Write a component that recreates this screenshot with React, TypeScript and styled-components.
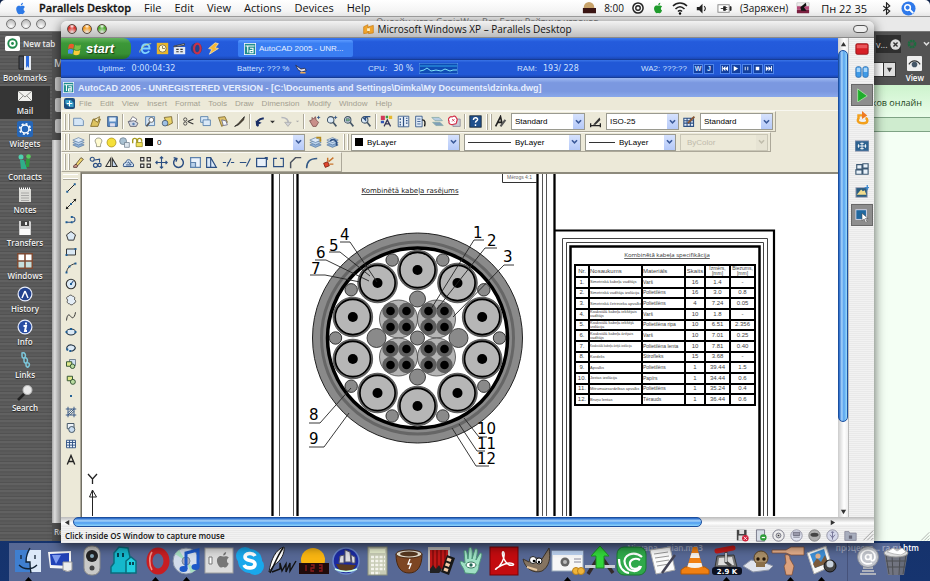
import React from 'react';
import styled, { createGlobalStyle, css } from 'styled-components';

const MAC = '"Open Sans", "Noto Sans", sans-serif';
const XP = '"Liberation Sans", Arial, sans-serif';
const CAD = '"DejaVu Sans", sans-serif';

const Global = createGlobalStyle`
  * { box-sizing: border-box; }
  html, body, #root { height: 100%; margin: 0; }
  body { overflow: hidden; font-family: ${MAC}; font-size: 10px; color: #111; }
  button, select, input { font: inherit; color: inherit; margin: 0; padding: 0; border: 0; background: none; border-radius: 0; }
  svg { display: block; flex: none; }
`;

/* ---------- desktop and menu bar ---------- */

const Desktop = styled.div`
  position: relative;
  height: 100%;
  min-height: 560px;
  overflow: hidden;
  background: linear-gradient(#0d2148, #16346f);
`;

const MenuBar = styled.nav`
  position: relative;
  z-index: 5;
  display: flex;
  align-items: center;
  height: 17px;
  padding: 0 14px;
  background: linear-gradient(#fff, #f4f4f4 70%, #e6e6e6);
  border-bottom: 1px solid #9a9a9a;
  font-size: 11px;
  border-radius: 5px 5px 0 0;
`;

const MenuButton = styled.button<{ $bold?: boolean }>`
  height: 16px;
  line-height: 16px;
  margin-left: ${p => (p.$bold ? 12 : 13)}px;
  font-weight: ${p => (p.$bold ? 600 : 500)};
  -webkit-text-stroke: ${p => (p.$bold ? '0.3px #111' : '0')};
`;

const MenuExtras = styled.div`
  display: flex;
  align-items: center;
  gap: 8px;
  margin-left: auto;
  font-size: 10px;
  white-space: nowrap;
`;

const Clock = styled.span`
  font-size: 11px;
  margin: 0 5px 0 3px;
`;

/* ---------- browser behind ---------- */

const Browser = styled.section`
  position: absolute;
  inset: 17px 0 40px 0;
  display: flex;
  flex-direction: column;
  background: #535353;
`;

const BrowserTitle = styled.header`
  position: relative;
  display: flex;
  align-items: flex-start;
  gap: 5px;
  height: 15px;
  padding: 2px 6px;
  background: #e9e9e9;
  border-bottom: 1px solid #777;
`;

const GreyDot = styled.button`
  width: 10px;
  height: 10px;
  border: 1px solid #777;
  border-radius: 50%;
  background: radial-gradient(circle at 50% 80%, #fff, #aaa);
`;

const BrowserCaption = styled.span`
  flex: 1;
  text-align: center;
  font-size: 9px;
  line-height: 6px;
  color: #777;
`;

const BrowserBody = styled.div`
  flex: 1;
  display: flex;
  min-height: 0;
`;

const SidePanel = styled.aside`
  width: 52px;
  background: repeating-linear-gradient(#5b5b5b 0 2px, #525252 2px 3px, #616161 3px 5px, #575757 5px 7px);
`;

const NewTab = styled.button`
  display: flex;
  align-items: center;
  gap: 3px;
  height: 21px;
  padding: 2px 0 0 5px;
  color: #eee;
  font-size: 8px;
  font-weight: 600;
  white-space: nowrap;
`;

const PanelItem = styled.button<{ $active?: boolean }>`
  display: flex;
  flex-direction: column;
  align-items: center;
  justify-content: center;
  gap: 1px;
  width: 50px;
  height: 33px;
  color: #f2f2f2;
  font-size: 8px;
  line-height: 12px;
  font-weight: 600;
  text-shadow: 0 1px 1px #222;
  background: ${p => (p.$active ? '#353535' : 'transparent')};
`;

const PageStrip = styled.div`
  width: 9px;
  overflow: hidden;
  display: flex;
  flex-direction: column;
  color: #ddd;
  font-weight: 600;
  padding: 24px 0 0 2px;
`;

const StripButton = styled.span`
  height: 14px;
  margin: 7px 0 0 1px;
  background: #ccc;
  border-radius: 2px 0 0 2px;
`;

const StripPage = styled.div`
  flex: 1;
  margin: 7px 0 0 -2px;
  background: linear-gradient(90deg, #aaa, #f0f0f0 30%, #ccc);
`;

const StripLabel = styled.span`
  height: 18px;
  line-height: 18px;
  font-size: 8px;
`;

const BrowserRight = styled.div`
  width: 62px;
  margin-left: auto;
  display: flex;
  flex-direction: column;
`;

const TabRow = styled.div`
  display: flex;
  align-items: center;
  gap: 6px;
  height: 21px;
  padding: 3px 4px 0 8px;
  color: #ddd;
  font-size: 9px;
`;

const TabEnd = styled.div`
  display: flex;
  align-items: center;
  justify-content: flex-end;
  gap: 2px;
  height: 18px;
  width: 26px;
  background: #2f2f2f;
`;

const AddressRow = styled.div`
  display: flex;
  align-items: center;
  justify-content: space-between;
  height: 32px;
  padding: 0 6px 0 0;
`;

const AddressDrop = styled.button`
  display: flex;
  align-items: stretch;
  justify-content: flex-end;
  width: 28px;
  height: 15px;
  background: #fff;
  border: 1px solid #333;
`;

const DropBox = styled.span`
  display: flex;
  align-items: center;
  justify-content: center;
  width: 12px;
  background: #ddd;
  border-left: 1px solid #333;
`;

const ViewButton = styled.button`
  display: flex;
  flex-direction: column;
  align-items: center;
  gap: 1px;
  color: #fff;
  font-size: 8px;
  line-height: 11px;
  font-weight: 600;
`;

const PageLink = styled.a`
  height: 33px;
  line-height: 36px;
  padding-right: 8px;
  text-align: right;
  white-space: nowrap;
  font-size: 9px;
  color: #1d4420;
  text-decoration: none;
  background: linear-gradient(#cdf3cd, #e9fde9);
  border-bottom: 1px solid #7ea384;
`;

const PageBand = styled.div`
  height: 14px;
  background: #cfeccf;
  border-bottom: 1px solid #7ea384;
`;

const PageBlank = styled.div`
  flex: 1;
  background: #f4fff4;
  display: flex;
  align-items: flex-end;
  justify-content: flex-end;
`;

/* ---------- virtual machine window ---------- */

const VmWindow = styled.main`
  position: absolute;
  inset: 21px 56px 38px 61px;
  display: flex;
  flex-direction: column;
  background: #ececec;
  border-radius: 6px 6px 0 0;
  overflow: hidden;
  box-shadow: 0 3px 12px rgba(0, 0, 0, 0.65);
`;

const VmTitle = styled.header`
  display: flex;
  align-items: center;
  height: 17px;
  padding: 0 6px;
  background: linear-gradient(#f2f2f2, #d9d9d9 50%, #bdbdbd);
  border-bottom: 1px solid #8a8a8a;
`;

const Lights = styled.div`
  display: flex;
  gap: 5px;
  width: 60px;
`;

const Light = styled.button<{ $c: string }>`
  width: 10px;
  height: 10px;
  border-radius: 50%;
  border: 1px solid #5a4a42;
  background: radial-gradient(circle at 50% 15%, #fff 0, transparent 35%),
    radial-gradient(circle at 50% 90%, #fff8 0, ${p => p.$c} 60%);
`;

const VmCaption = styled.h1`
  flex: 1;
  display: flex;
  align-items: center;
  justify-content: center;
  gap: 3px;
  margin: 0;
  font-size: 10px;
  font-weight: 500;
`;

const TitleEnd = styled.div`
  display: flex;
  justify-content: flex-end;
  width: 60px;
`;

const Pill = styled.button`
  width: 15px;
  height: 8px;
  border: 1px solid #555;
  border-radius: 4px;
  background: #eee;
`;

const VmMiddle = styled.div`
  flex: 1;
  display: flex;
  min-height: 0;
`;

const Guest = styled.div`
  flex: 1;
  min-width: 0;
  display: flex;
  flex-direction: column;
  background: #ece9d8;
  font-family: ${XP};
  font-size: 8px;
`;

const aqua = css`
  border: 1px solid #1c4f9e;
  border-radius: 5px;
`;

const VScroll = styled.div`
  width: 10px;
  display: flex;
  flex-direction: column;
  align-items: center;
  background: linear-gradient(90deg, #ccc, #fff 60%, #eee);
`;

const VThumb = styled.div`
  width: 10px;
  height: 372px;
  ${aqua}
  background: linear-gradient(90deg, #1c5fc4, #a6d4fb 35%, #56a2ee 60%, #9bdcfc);
`;

const VRest = styled.div`
  flex: 1;
`;

const HScroll = styled.div`
  display: flex;
  align-items: center;
  height: 10px;
  padding: 0 36px 0 0;
  background: linear-gradient(#bbb, #fff 60%, #e4e4e4);
`;

const HThumb = styled.div`
  width: 81%;
  height: 10px;
  margin-right: auto;
  ${aqua}
  background: linear-gradient(#1c5fc4, #a6d4fb 35%, #4f9df0 60%, #8fd6fb);
`;

const ScrollArrow = styled.button`
  display: flex;
  align-items: center;
  justify-content: center;
  width: 12px;
  height: 12px;
`;

const SideTools = styled.div`
  width: 26px;
  display: flex;
  flex-direction: column;
  align-items: center;
  gap: 1px;
  background: repeating-linear-gradient(#f2f2f2 0 1px, #e9e9e9 1px 2px);
  border-left: 1px solid #bbb;
`;

const SideButton = styled.button<{ $on?: boolean; $gap?: boolean }>`
  display: flex;
  align-items: center;
  justify-content: center;
  width: 22px;
  height: 22px;
  margin-top: ${p => (p.$gap ? 5 : 0)}px;
  background: ${p => (p.$on ? '#8d8d8d' : 'transparent')};
  border: ${p => (p.$on ? '1px solid #686868' : '0')};
`;

const StatusBar = styled.footer`
  display: flex;
  align-items: center;
  height: 16px;
  padding: 0 0 0 4px;
  background: repeating-linear-gradient(#f2f2f2 0 1px, #e9e9e9 1px 2px);
  font-size: 8px;
  font-weight: 600;
`;

const StatusIcons = styled.div`
  display: flex;
  align-items: center;
  gap: 5px;
  margin-left: auto;
`;

/* ---------- XP task bar ---------- */

const TaskBar = styled.div`
  display: flex;
  align-items: center;
  height: 22px;
  background: linear-gradient(#3a79ee, #245bdc 18%, #2259d8 85%, #1a47b5);
  border-bottom: 1px solid #163c96;
`;

const StartButton = styled.button`
  display: flex;
  align-items: center;
  gap: 4px;
  width: 70px;
  height: 21px;
  padding-left: 7px;
  border-radius: 0 8px 8px 0;
  background: linear-gradient(#63b35d, #3c9838 25%, #379033 75%, #256e22);
  color: #fff;
  font: italic 700 13px/20px ${XP};
  text-shadow: 1px 1px 1px #163c12;
`;

const QuickLaunch = styled.div`
  display: flex;
  gap: 3px;
  margin: 0 17px 0 8px;
`;

const QuickButton = styled.button`
  width: 14px;
  height: 14px;
`;

const TaskButton = styled.button`
  display: flex;
  align-items: center;
  gap: 3px;
  width: 115px;
  height: 17px;
  padding-left: 6px;
  border-radius: 2px;
  background: linear-gradient(#5c9bff, #3a7ef2 20%, #3a7ef2);
  color: #e8f0ff;
  white-space: nowrap;
`;

const InfoBar = styled.div`
  display: grid;
  grid-template-columns: 139fr 131fr 149fr 124fr 197fr;
  align-items: center;
  height: 18px;
  padding-left: 37px;
  background: linear-gradient(#3a74e6, #2158d6 15%, #2158d6 85%, #1a47b5);
  border-bottom: 1px solid #163c96;
  color: #cfe0ff;
  white-space: nowrap;
`;

const InfoCell = styled.div`
  display: flex;
  align-items: center;
  gap: 6px;
`;

const Lcd = styled.span`
  font: 8px ${CAD};
`;

const PlayerButtons = styled.div`
  display: flex;
  gap: 1px;
`;

const PlayerButton = styled.button<{ $gap?: boolean }>`
  width: 10px;
  height: 10px;
  margin-left: ${p => (p.$gap ? 5 : 0)}px;
  background: #123f9e;
  border: 1px solid #4f85ea;
  color: #cfe0ff;
  font: 700 7px/8px ${XP};
  display: flex;
  align-items: center;
  justify-content: center;
`;

/* ---------- AutoCAD ---------- */

const CadTitle = styled.div`
  display: flex;
  align-items: center;
  gap: 4px;
  height: 19px;
  padding-left: 2px;
  background: linear-gradient(#9db9f2, #7b98e0 25%, #7b98e0 70%, #8aa8ea);
  color: #e6eefe;
  font-size: 9px;
  font-weight: 700;
  white-space: nowrap;
`;

const CadMenu = styled.nav`
  display: flex;
  align-items: center;
  height: 14px;
  padding-left: 3px;
  border-bottom: 1px solid #f8f7f0;
`;

const CadMenuItem = styled.button`
  margin-right: 8px;
  color: #a39f91;
  line-height: 12px;
`;

const CadIcon = styled.span`
  margin-right: 4px;
`;

const Toolbar = styled.div<{ $tall?: boolean }>`
  display: flex;
  align-items: center;
  align-self: flex-start;
  height: ${p => (p.$tall ? 21 : 20)}px;
  border: 1px solid #fbfaf4;
  border-right-color: #aca899;
  border-bottom-color: #aca899;
`;

const Grip = styled.span`
  width: 5px;
  height: 16px;
  margin: 0 1px 0 2px;
  border: 1px solid #fff;
  border-width: 0 1px;
  box-shadow: 1px 0 0 #aca899, inset 1px 0 0 #aca899;
`;

const Tool = styled.button<{ $w?: number }>`
  display: flex;
  align-items: center;
  justify-content: center;
  width: ${p => p.$w ?? 17}px;
  height: 17px;
`;

const Split = styled.span`
  width: 2px;
  height: 15px;
  margin: 0 1px;
  border-left: 1px solid #aca899;
  border-right: 1px solid #fff;
`;

const Combo = styled.label<{ $w: number; $off?: boolean }>`
  display: flex;
  align-items: center;
  width: ${p => p.$w}px;
  height: 17px;
  margin: 0 2px;
  padding-left: 3px;
  gap: 2px;
  border: 1px solid ${p => (p.$off ? '#c9c6b6' : '#9a9a90')};
  background: ${p => (p.$off ? '#ece9d8' : '#fff')};
  color: ${p => (p.$off ? '#aca899' : '#000')};
`;

const Picker = styled.select<{ $in?: number }>`
  appearance: none;
  flex: 1;
  min-width: 0;
  height: 15px;
  padding-left: ${p => p.$in ?? 0}px;
  outline: none;
`;

const Drop = styled.span<{ $off?: boolean }>`
  display: flex;
  align-items: center;
  justify-content: center;
  width: 11px;
  height: 15px;
  background: ${p => (p.$off ? '#e6e3d3' : 'linear-gradient(#d6e2fd, #b5c9f8)')};
`;

const Swatch = styled.span`
  width: 8px;
  height: 8px;
  background: #000;
`;

const Rule = styled.span<{ $w: number }>`
  width: ${p => p.$w}px;
  height: 1px;
  background: #333;
`;

const ModifyRow = styled.div`
  display: flex;
  justify-content: space-between;
  width: 267px;
  margin-right: 4px;
`;

const Work = styled.div`
  flex: 1;
  display: flex;
  min-height: 0;
`;

const DrawTools = styled.div`
  width: 20px;
  display: flex;
  flex-direction: column;
  align-items: center;
  border-right: 1px solid #aca899;
`;

const DrawGrip = styled.span`
  width: 15px;
  height: 5px;
  margin: 2px 0 1px;
  border: 1px solid #fff;
  border-width: 1px 0;
  box-shadow: 0 1px 0 #aca899;
`;

const DrawTool = styled.button`
  display: flex;
  align-items: center;
  justify-content: center;
  width: 16px;
  height: 16px;
`;

const Sheet = styled.div`
  position: relative;
  flex: 1;
  min-width: 0;
  overflow: hidden;
  background: #fff;
  border-top: 2px solid #8d8a7c;
  border-left: 1px solid #716f64;
`;

const SpecTable = styled.table`
  position: absolute;
  left: 492px;
  top: 90px;
  width: 181px;
  height: 142px;
  table-layout: fixed;
  border-collapse: collapse;
  font-family: ${XP};
  font-size: 6px;
  line-height: 5px;
  color: #444;
  tbody tr {
    height: 10px;
  }
  th, td {
    border: 2px solid #000;
    padding: 0;
    font-weight: 400;
    text-align: center;
    overflow: hidden;
    white-space: nowrap;
  }
  th:nth-child(2), td:nth-child(2), th:nth-child(3), td:nth-child(3) {
    text-align: left;
  }
  td:nth-child(3), th:nth-child(n + 5) {
    font-size: 5px;
  }
`;

const Tiny = styled.td<{ $long: boolean }>`
  && {
    font-size: ${p => (p.$long ? 3 : 4)}px;
    line-height: 4px;
    white-space: pre;
  }
`;

/* ---------- dock ---------- */

const FileLabels = styled.div`
  position: absolute;
  right: 11px;
  bottom: 27px;
  display: flex;
  gap: 133px;
  color: #fff;
  font-size: 8px;
  line-height: 12px;
  font-weight: 600;
`;

const Dock = styled.nav`
  position: absolute;
  inset: auto 30px 0 9px;
  display: flex;
  height: 38px;
  background: rgba(118, 130, 168, 0.68);
`;

const DockApps = styled.div`
  flex: 1;
  display: flex;
  justify-content: space-between;
  padding: 4px 11px 0 5px;
`;

const DockEnd = styled.div`
  width: 53px;
  display: flex;
  justify-content: space-between;
  padding: 4px 0 0 6px;
  border-left: 1px solid #46527a;
`;

const DockItem = styled.button`
  display: flex;
  flex-direction: column;
  align-items: center;
  justify-content: space-between;
  width: 28px;
  height: 34px;
`;

/* ---------- icon drawings ---------- */

type Art = React.ReactNode;
const Pic = ({ s = 14, v = 16, children }: { s?: number; v?: number; children: Art }) => (
  <svg width={s} height={s} viewBox={`0 0 ${v} ${v}`} aria-hidden="true">{children}</svg>
);

const N = '#2c4f82';
const line = { fill: 'none', stroke: N, strokeWidth: 1.4 } as const;
const APPLE = 'M11 1c-1.6.3-2.8 1.600-2.600 3.200C10 4.100 11.200 2.700 11 1zM8.200 5.100C7.200 4.600 5.800 4.300 4.600 5 2.300 6.300 2.300 9.600 3.500 12c.8 1.700 1.900 3.300 3.100 3 .9-.3 1.700-.6 2.700-.1 1.700.8 3.200-1.200 4.100-3.500-2-1-2.300-4 .1-5.300-1.300-1.700-3.500-1.700-5.300-1z';
const Apple = ({ c, s = 14 }: { c: string; s?: number }) => <Pic s={s}><path d={APPLE} fill={c} /></Pic>;

const Arrow = ({ d, c = '#333' }: { d: string; c?: string }) => (
  <svg width="7" height="7" viewBox="0 0 8 8" aria-hidden="true"><path d={d} fill={c} /></svg>
);
const LEFT = 'M6 1v6L1 4z';
const RIGHT = 'M2 1v6l5-3z';
const UP = 'M1 6h6L4 1z';
const DOWN = 'M1 2h6L4 7z';

const Chevron = ({ c = '#3b5a9a' }: { c?: string }) => (
  <svg width="7" height="6" viewBox="0 0 8 7" aria-hidden="true"><path d="M1 1.500l3 3 3-3" fill="none" stroke={c} strokeWidth="1.800" /></svg>
);

const sheet = <path d="M2 4h9l3 3v6H2z" fill="#d5e6f6" stroke="#5f83ad" />;
const lens = <><circle cx="7" cy="6" r="4" fill="#dceaf6" stroke="#456" strokeWidth="1.300" /><path d="M10 9l4 5" stroke="#456" strokeWidth="2" /></>;

const standard: [string, Art, number?][] = [
  ['New', sheet],
  ['Open', <><path d="M2 14l3-9h9l-3 9z" fill="#ddc35f" stroke="#7b6420" /><path d="M6 6l7-4-2 7z" fill="#f7efc0" stroke="#7b6420" /></>],
  ['Save', <><path d="M2 2h12v12H2z" fill="#5d8dc4" stroke={N} /><path d="M4 3h8v5H4z" fill="#e2edf8" /><path d="M5 10h6v4H5z" fill="#dde" /></>],
  ['|', null],
  ['Plot', <><path d="M3 8l4-6 5 3-2 4z" fill="#fff" stroke="#667" /><path d="M1.500 8l7-1 5 3-2 4H4z" fill="#cfd6e4" stroke="#556" /><circle cx="8" cy="11" r="1.500" fill="#5a80b0" /></>],
  ['Plot preview', <><path d="M2 2h11v11H2z" fill="#d5e6f6" stroke="#4a76a8" /><circle cx="9" cy="6" r="3" fill="#fff" stroke="#555" /><path d="M7 9l-4 5" stroke="#555" strokeWidth="2" /></>],
  ['Publish', <><path d="M4 3l9-1 1 8-6 3z" fill="#ead36a" stroke="#6f5c28" /><circle cx="5" cy="10" r="3.500" fill="#9fc0e4" stroke="#456" /></>],
  ['|', null],
  ['Cut', <><path d="M7 8l7-3M7 8l7 3" stroke="#333" strokeWidth="1.300" /><circle cx="4" cy="5.500" r="2" fill="none" stroke="#333" /><circle cx="4" cy="10.500" r="2" fill="none" stroke="#333" /></>],
  ['Copy', <><path d="M2 2h9v7H2z" fill="#dbe9f7" stroke="#4a76a8" /><path d="M5 6h9v7H5z" fill="#dbe9f7" stroke="#4a76a8" /></>],
  ['Paste', <><path d="M3 3l8-1 3 7-7 5z" fill="#dfc36b" stroke="#796326" /><path d="M7 6l5 1 2 5-5 1z" fill="#f4f7fb" stroke="#668" /></>],
  ['Match', <path d="M2 14l4-3 8-9-1 4-6 6z" fill="#5c4b33" stroke="#222" />],
  ['|', null],
  ['Undo', <><path d="M5 14c-3-6 1-9 7-10" fill="none" stroke="#1b2f66" strokeWidth="2.600" /><path d="M1 8l8 0-5 6z" fill="#1b2f66" transform="rotate(20 5 10)" /></>, 16],
  ['Undo list', <path d="M5 7h6l-3 3z" fill="#333" />, 9],
  ['Redo', <><path d="M3 3c6 0 9 3 8 7" fill="none" stroke="#b4b6bc" strokeWidth="2" /><path d="M7 9h8l-4 5z" fill="#d0d2d6" stroke="#aaa" /></>, 16],
  ['Redo list', <path d="M6 7h4l-2 2z" fill="#aaa" />, 9],
  ['|', null],
  ['Pan', <><path d="M2 7l3-1 0-3 2 2 2-3 1 4 3 3-3 5H6z" fill="#c98f8a" stroke="#7b4c4c" /><path d="M11 3h4M13 1v4" stroke={N} /></>],
  ['Zoom realtime', <>{lens}<path d="M11 3h4M13 1v4" stroke={N} /></>],
  ['Zoom window', <>{lens}<path d="M5 4.500h4v3H5z" fill="#7b8" stroke="#456" strokeWidth=".8" /></>],
  ['Zoom previous', <>{lens}<path d="M14 2H8l0 4-3-3" fill="none" stroke={N} strokeWidth="1.800" /></>],
  ['|', null],
  ['Properties', <><path d="M1 1h5v5H1z" fill="#d13a5a" /><path d="M7 1h3v3H7z" fill="#3a9c44" /><path d="M11 1h4v4h-4z" fill="#e4b830" /><path d="M1 7h4v3H1z" fill="#3156b6" /><path d="M5 14l4-8 4 8M6 11h6" fill="none" stroke="#335" strokeWidth="1.500" /></>],
  ['Design center', <><path d="M1.500 1.500h13v13h-13z" fill="#e7eff8" stroke={N} /><path d="M8 2v12M4 4v2M4 8v2M11 4h2M11 7h2M11 10h2M4 11v2" stroke={N} strokeWidth="1.500" /></>],
  ['Tool palettes', <><path d="M2 1.500h8v13H2z" fill="#dce8f6" stroke={N} /><path d="M4 5h4M4 8h4M4 11h4" stroke={N} /><path d="M10 6c4 0 4 3 3 8" fill="none" stroke="#111" strokeWidth="1.600" /></>],
  ['Sheet set', <><path d="M1 3h9l4 4H5z" fill="#b7cde2" stroke="#8aa" /><path d="M2 9h9l4 4H6z" fill="#7f9fb8" stroke="#8aa" /></>],
  ['Markup', <><path d="M6 5h9v9H6z" fill="#c8ccd6" stroke="#889" /><path d="M2 3c2-2 3 0 4-1s3-1 4 1 2 2 1 4 0 4-2 4-5 2-7 0 0-3-1-4 0-3 1-4z" fill="#fff" stroke="#d2304a" strokeWidth="1.500" /><path d="M5 5l3 3M8 5L5 8" stroke="#d2304a" /></>],
  ['|', null],
  ['Help', <><rect x="1" y="1" width="14" height="14" fill="#20508c" stroke="#123" /><path d="M5.500 6c0-4 6-3 5 0-.5 1.400-2.500 1.300-2.500 3.500M8 11.500v2" fill="none" stroke="#fff" strokeWidth="1.800" /></>],
];

const layersArt = <><path d="M1 11l7-3 7 3-7 3z" fill="#8fb0d4" stroke="#456a98" strokeWidth=".7" /><path d="M1 8l7-3 7 3-7 3z" fill="#bcd2ea" stroke="#456a98" strokeWidth=".7" /><path d="M1 5l7-3 7 3-7 3z" fill="#dce9f7" stroke="#456a98" strokeWidth=".7" /></>;

const modify: [string, Art][] = [
  ['Erase', <><path d="M4 11l7-9 3 2-7 8z" fill="#edd46e" stroke="#5b4a2c" /><path d="M2 12l3-2 2 2-1 2H2z" fill="#c98" stroke="#533" /></>],
  ['Copy object', <g {...line}><circle cx="4" cy="4" r="2.500" /><circle cx="8" cy="11.500" r="2.500" /><circle cx="13" cy="11" r="2" /><path d="M7 5l6-1v4" /></g>],
  ['Mirror', <><path d="M7 3v10H1z" fill="none" stroke="#333" strokeWidth="1.300" /><path d="M9 3v10h6z" fill="#c6daf0" stroke="#333" strokeWidth="1.300" /></>],
  ['Offset', <path d="M2 13h12c1-3-1-5-3-5 1-4-6-5-6 0-3 0-4 3-3 5zM5 11h6c0-2-2-1-2-2 0-2-2-2-2 0" fill="#d5e4f4" stroke={N} strokeWidth="1.200" />],
  ['Array', <path d="M2 2h4v4H2zM10 2h4v4h-4zM2 10h4v4H2zM10 10h4v4h-4z" fill="#fff" stroke="#333" strokeWidth="1.400" />],
  ['Move', <path d="M8 1v14M1 8h14M6 3l2-2 2 2M6 13l2 2 2-2M3 6L1 8l2 2M13 6l2 2-2 2" {...line} />],
  ['Rotate', <path d="M5 3a6 6 0 1 0 6 0M2 2l4 1-1 4" {...line} strokeWidth={1.800} />],
  ['Scale', <><path d="M2 2h12v12H2z" fill="#eaf2fb" stroke="#5f83ad" strokeWidth="1.500" /><path d="M2 8h6v6H2z" fill="#b8d0ea" stroke="#5f83ad" strokeWidth="1.500" /></>],
  ['Stretch', <path d="M2 2h5v12H2zM7 2l7 12H7" fill="#dceaf8" stroke={N} strokeWidth="1.400" />],
  ['Trim', <path d="M1 8h4M7 8h1M11 8h4M6 13l5-10" {...line} />],
  ['Extend', <path d="M1 8h8M11 8h1M9 13l5-10" {...line} />],
  ['Break at point', <path d="M2 3h12v10H2zM12 2h3v3" fill="#e8f0f9" stroke={N} strokeWidth="1.500" />],
  ['Break', <path d="M6 3H2v10h12V3h-4" {...line} />],
  ['Chamfer', <path d="M2 15V8l6-6h7" {...line} stroke="#4c535e" strokeWidth={1.800} />],
  ['Fillet', <path d="M2 15c0-8 4-12 13-12" {...line} stroke="#345a86" strokeWidth={1.800} />],
  ['Explode', <><path d="M2 9l5-2 2 5-5 2z" fill="#e0462e" stroke="#7a2010" /><path d="M8 7l6-5M9 10l5 0M7 6l0-4" stroke="#c8742c" strokeWidth="1.800" /></>],
];

const P = ({ x, y }: { x: number; y: number }) => <rect x={x - 1.3} y={y - 1.3} width="2.600" height="2.600" fill="#1c5c94" />;
const draw: [string, Art][] = [
  ['Line', <><path d="M3 13L13 3" stroke="#222" strokeWidth="1.300" /><P x={3} y={13} /><P x={13} y={3} /></>],
  ['Construction line', <><path d="M2 14L14 2" stroke="#222" strokeWidth="1.300" /><path d="M1 15l1-4 3 3zM15 1l-1 4-3-3z" fill="#111" /><P x={8} y={8} /></>],
  ['Polyline', <><path d="M2 11h7M9 4c5-1 6 6 1 7" {...line} /><P x={2} y={11} /><P x={9} y={11} /><P x={9} y={4} /></>],
  ['Polygon', <path d="M8 2l6 4.500-2.300 7H4.300L2 6.500z" fill="#dbe9f5" stroke="#333" strokeWidth="1.300" />],
  ['Rectangle', <><path d="M2 4h12v8H2z" fill="#dbe9f5" stroke="#333" strokeWidth="1.300" /><P x={2} y={12} /><P x={14} y={4} /></>],
  ['Arc', <><path d="M2 14C3 8 6 4 14 2" fill="none" stroke="#333" strokeWidth="1.300" /><P x={2} y={14} /><P x={6} y={6} /><P x={14} y={2} /></>],
  ['Circle', <><circle cx="8" cy="8" r="6.300" fill="#dbe9f5" stroke="#333" strokeWidth="1.500" /><path d="M8 8l3-4" stroke={N} strokeWidth="1.500" /><P x={8} y={8} /></>],
  ['Revision cloud', <path d="M4 8C1 7 2 3 5 3c1-2 4-2 5 0 3 0 4 3 2 4 3 1 3 5 0 5-1 3-5 3-6 1-3 0-4-3-2-5z" fill="#e4edf6" stroke="#444" strokeWidth="1.200" />],
  ['Spline', <path d="M2 14C3 4 6 6 8 9s5 1 6-6" fill="none" stroke="#333" strokeWidth="1.300" />],
  ['Ellipse', <><ellipse cx="8" cy="8" rx="6" ry="4" fill="#dbe9f5" stroke="#234" strokeWidth="1.500" /><P x={2} y={8} /><P x={14} y={8} /><P x={8} y={4} /></>],
  ['Ellipse arc', <><path d="M4 11C0 8 4 3 9 4s7 5 1 8H8" fill="#dbe9f5" stroke="#234" strokeWidth="1.500" /><P x={7} y={12} /><P x={3} y={10} /></>],
  ['Insert block', <><path d="M6 2h8v8H6z" fill="#cfe0f2" stroke="#567" /><path d="M2 5h7v6H2z" fill="#dfe88a" stroke="#353" strokeWidth="1.300" /><circle cx="10" cy="11" r="3" fill="#b9dba0" stroke="#353" strokeWidth="1.300" /></>],
  ['Make block', <><path d="M3 3h7v6H3z" fill="#dfe88a" stroke="#353" strokeWidth="1.300" /><circle cx="10.500" cy="10.500" r="3.300" fill="#b9dba0" stroke="#353" strokeWidth="1.300" /></>],
  ['Point', <P x={8} y={8} />],
  ['Hatch', <path d="M1 4h14M1 12h14M4 1v14M12 1v14M4 9l5-5M4 12l8-8M7 12l5-5" fill="none" stroke={N} strokeWidth="1.200" />],
  ['Region', <><path d="M3 2h9v7H3z" fill="#eef4fa" stroke="#456" strokeWidth="1.300" /><circle cx="9" cy="10" r="4" fill="#c9dcef" stroke="#456" strokeWidth="1.300" /></>],
  ['Table', <path d="M2 3h12v10H2zM2 6h12M2 9.500h12M6 3v10M10 3v10" fill="#e9f1fa" stroke={N} strokeWidth="1.200" />],
  ['Text', <path d="M3 14L8 2l5 12M5 10h6" fill="none" stroke="#222" strokeWidth="1.800" />],
];

const quick: [string, Art][] = [
  ['Internet Explorer', <><path d="M3 8h10c0-7-9-7-9.500 0s7 7 9 3" fill="none" stroke="#7fd2ff" strokeWidth="2.200" /><path d="M1 13C0 9 8 2 15 2" fill="none" stroke="#d8e070" /></>],
  ['Outlook', <><rect x="1" y="1" width="14" height="14" fill="#e8b629" /><circle cx="8" cy="8" r="4.500" fill="#fff8d0" stroke="#764" /><path d="M8 5v3h3" fill="none" stroke="#764" /></>],
  ['Movie', <><path d="M1 6h14v9H1z" fill="#e4e9f2" /><path d="M1 5l13-3v2L1 6z" fill="#ddd" stroke="#333" /><path d="M4 9h3M9 9h3M4 12h3M9 12h3" stroke="#333" strokeWidth="1.400" /></>],
  ['Opera', <><circle cx="8" cy="8" r="7" fill="#25438e" /><ellipse cx="9" cy="8" rx="4" ry="6" fill="none" stroke="#c8324a" strokeWidth="2.600" /></>],
  ['Winamp', <path d="M10 1L2 8l4 1-3 6 11-7-4-1 4-5z" fill="#f7b733" stroke="#f4e2b0" />],
];

const AcadIcon = ({ s = 12 }: { s?: number }) => (
  <Pic s={s}><rect x=".5" y=".5" width="15" height="15" fill="#1f8d8d" stroke="#fff" /><path d="M2 4h12M5 4v9M8 7h4v6H8v-3h4" fill="none" stroke="#fff" strokeWidth="1.500" /></Pic>
);

const disc = <circle cx="8" cy="8" r="7.500" fill="#e9eefb" />;
const panel: [string, Art][] = [
  ['Bookmarks', <><path d="M2 1h5v13H2z" fill="#444a57" stroke="#222" /><path d="M7 1h7v14H7z" fill="#e5e9ef" /><path d="M9 1h3v12l-1.500-2L9 13z" fill="#2b6be0" /></>],
  ['Mail', <><path d="M1 3h14v10H1z" fill="#f1f1ee" /><path d="M1 3l7 6 7-6M1 13l5-5M15 13l-5-5" fill="none" stroke="#8e8e8a" /></>],
  ['Widgets', <><rect x="0" y="0" width="16" height="16" rx="2" fill="#2566b8" /><circle cx="8" cy="8" r="4" fill="none" stroke="#fff" strokeWidth="1.500" /><circle cx="8" cy="8" r="5.300" fill="none" stroke="#fff" strokeWidth="1.600" strokeDasharray="2 2.160" /></>],
  ['Contacts', <><path d="M3 6h4l3 9H4z" fill="#2fae8a" /><circle cx="4" cy="3" r="2.500" fill="#4fd0ae" /><path d="M9 5h4l-1 8H9z" fill="#2f9a3c" /><circle cx="11.500" cy="2.500" r="2.300" fill="#57cc5c" /></>],
  ['Notes', <><path d="M2 2h12v13H2z" fill="#dcdcd8" /><path d="M2 1.500h12" stroke="#fff" strokeWidth="2" strokeDasharray="1 1" /><path d="M4 6h8M4 8.500h8M4 11h8M4 13.500h8" stroke="#999" strokeWidth=".8" /></>],
  ['Transfers', <><path d="M2 1h11l1 1v13H2z" fill="#d0d0d0" /><path d="M4 1h8v5H4z" fill="#444" /><path d="M8 2h2v3H8z" fill="#eee" /><path d="M3 9h10v6H3z" fill="#fafafa" /></>],
  ['Windows', <><path d="M0 0h16v16H0z" fill="#7d4a33" /><path d="M1.500 1.500h5.700v5.700H1.500zM8.800 1.500h5.700v5.700H8.800z" fill="#fff" /><path d="M1.500 8.800h5.700v5.700H1.500zM8.800 8.800h5.700v5.700H8.800z" fill="#c5dfdd" /></>],
  ['History', <>{disc}<circle cx="8" cy="8" r="6.300" fill="#22428f" /><path d="M8 5l-3 7M8 5l3 7" stroke="#fff" strokeWidth="1.500" /></>],
  ['Info', <>{disc}<circle cx="8" cy="8" r="6.300" fill="#2a4ea3" /><path d="M9 3.500v2M6.500 7H9l-1 5h2" fill="none" stroke="#fff" strokeWidth="2" /></>],
  ['Links', <path d="M5 1c3-1 4 2 3 4S5 6 5 4s0-2 0-3zM7 6c3-1 4 2 3 4s-3 1-3-1 0-2 0-3zM9 11c3-1 4 1 3 3s-3 1-3-1z" fill="none" stroke="#7cc8dc" strokeWidth="1.500" />],
  ['Search', <><path d="M1 15l6-6" stroke="#222" strokeWidth="2.600" /><circle cx="10.500" cy="5" r="4.500" fill="#e8e8e8" stroke="#bbb" /></>],
];

const side: [string, Art, boolean?, boolean?][] = [
  ['Stop', <><rect x="1" y="2" width="14" height="12" rx="1.500" fill="#d71f26" stroke="#8f1015" /><path d="M2 3h12v4H2z" fill="#e8565a" /></>],
  ['Pause', <><rect x="1" y="2" width="6" height="12" rx="2" fill="#3f9be8" stroke="#2b6db0" /><rect x="9" y="2" width="6" height="12" rx="2" fill="#3f9be8" stroke="#2b6db0" /><path d="M2 3h4v5H2zM10 3h4v5h-4z" fill="#a8d6fa" /></>],
  ['Play', <path d="M3 1l11 8-11 7z" fill="#1fae2b" stroke="#bdf0b5" strokeWidth=".8" />, true],
  ['Reset', <><path d="M4 8c-3 6 4 6 6 6 5 0 5-5 2-6M4 9V5h4" fill="none" stroke="#f2a01c" strokeWidth="2.800" /><path d="M8 0l6 5-6 4z" fill="#f07a22" /></>],
  ['Full screen', <><rect x="0" y="2" width="16" height="12" fill="#2f6391" stroke="#aab" /><path d="M3 8h10M8 4v8M4 6v4M12 6v4M6 5h4M6 11h4" stroke="#fff" /></>, false, true],
  ['Coherence', <path d="M2 3h6v5H2zM9 2h6v5H9zM1 9h7v5H1zM9 8h6v6H9z" fill="#e9f2fa" stroke="#3c5872" strokeWidth="1.300" />],
  ['Snapshot', <><rect x="1" y="3" width="13" height="11" fill="#2a5c80" stroke="#aab" /><path d="M2 11l5-6 2 2 2-1 2 5z" fill="#f2dc8c" /><path d="M14 0v6M11 3h5" stroke="#3f8ad0" strokeWidth="1.500" /></>],
  ['Capture', <><rect x="1" y="2" width="12" height="11" fill="#21689f" stroke="#dde" /><path d="M8 6l7 6-3 0 2 4-2 .5-1.500-4-2.500 2z" fill="#fff" stroke="#444" strokeWidth=".6" /></>, true],
];

const status: [string, Art][] = [
  ['Floppy', <><path d="M1 1h12v13H1z" fill="#444" /><path d="M4 1h6v5H4zM3 8h8v6H3z" fill="#ddd" /><circle cx="11.500" cy="11.500" r="4" fill="#d0203a" /><path d="M9.500 9.500l4 4M13.500 9.500l-4 4" stroke="#fff" /></>],
  ['Disk', <><path d="M3 1h10v14H3z" fill="#d7dde6" stroke="#667" /><circle cx="11.500" cy="10.500" r="4" fill="#2f9d3a" /><path d="M9.500 10.500h4" stroke="#fff" strokeWidth="1.500" /></>],
  ['CD', <><circle cx="8" cy="8" r="7" fill="#eee" stroke="#667" /><circle cx="8" cy="8" r="3" fill="#ccc" stroke="#667" /><circle cx="8" cy="8" r="1" fill="#333" /></>],
  ['Network', <><circle cx="8" cy="8" r="7" fill="#dfe2ef" stroke="#889" /><path d="M4 4h8v4H4zM4 10h8" fill="#99a" stroke="#667" /></>],
  ['Mouse', <><circle cx="8" cy="8" r="7" fill="#b0b0b0" stroke="#777" /><ellipse cx="8" cy="7" rx="5" ry="2.500" fill="#444" /></>],
  ['USB', <><circle cx="8" cy="8" r="7" fill="#d5d8ea" stroke="#889" /><path d="M8 3v10M5 7l3 4 3-4M6 4h4" fill="none" stroke="#779" strokeWidth="1.200" /></>],
  ['Folder', <><path d="M1 3h5l1 2h8v9H1z" fill="#a7adbd" stroke="#889" /><path d="M6 8h4v4H6z" fill="#667" /></>],
];

const dock: [string, Art, boolean?][] = [
  ['Finder', <><rect x="1" y="3" width="26" height="22" fill="#dce9f8" /><path d="M1 3h15c-3 5-4 10-3 12h3c0 4 0 7 1 10H1z" fill="#3f7fd0" /><path d="M16 1c-4 6-4 10-4 14h4c0 4 0 7 1 11M7 8v4M21 8v4M5 18c5 5 13 5 18 0" fill="none" stroke="#123" strokeWidth="1.300" /></>, true],
  ['Parallels', <><path d="M2 5l23-1v18L4 21z" fill="#f4f4f4" /><path d="M4 7l19-1v13L5 18z" fill="#2142b8" /><path d="M6 8l9 0-5 9z" fill="#7f9cf0" /><path d="M17 15h9v8q-4 3-9 0z" fill="#eee" stroke="#999" /></>],
  ['Clip', <><rect x="6" y="-1" width="16" height="29" rx="7" fill="#c9c9c7" stroke="#8a8a88" /><circle cx="14" cy="9" r="6" fill="#222" /><circle cx="14" cy="9" r="2" fill="#8ab" /><circle cx="14" cy="21" r="2.500" fill="#444" /></>],
  ['Adium', <><path d="M2 26v-6l3-4V6l5-6 9 1 2 9v16z" fill="#15b8cc" stroke="#0b6c7c" strokeWidth="1.500" /><path d="M17 26V14l5-4 5 4v12z" fill="#21cede" stroke="#0b6c7c" strokeWidth="1.500" /><path d="M9 6v4M14 6v4M21 15v3M24 15v3" stroke="#023" strokeWidth="1.600" /></>],
  ['Opera', <><ellipse cx="17" cy="14" rx="8.500" ry="10.500" fill="none" stroke="#c81e22" strokeWidth="6" /><path d="M11 5c-3 4-3 13 0 18" fill="none" stroke="#f29086" strokeWidth="1.600" /></>, true],
  ['iTunes', <><circle cx="13" cy="14" r="13" fill="#d2dceb" stroke="#8793a6" /><path d="M13 14L2 7l4-4zM13 14l10 9-5 3z" fill="#a7e0c2" /><circle cx="13" cy="14" r="4" fill="#aab" stroke="#789" /><path d="M13 22V6l12-3v17" fill="none" stroke="#1c58c8" strokeWidth="3" /><ellipse cx="10.500" cy="22" rx="4" ry="3" fill="#1c58c8" /><ellipse cx="22.500" cy="20" rx="4" ry="3" fill="#1c58c8" /></>, true],
  ['System Preferences', <><rect x="0" y="1" width="28" height="25" fill="#dcdcdc" stroke="#a0a0a0" /><g transform="translate(9 4) scale(1.100)"><path d={APPLE} fill="#777" /></g><path d="M4 10h3v7H4z" fill="#fff" stroke="#777" /></>],
  ['Skype', <><circle cx="9" cy="9" r="9" fill="#19a8ec" /><circle cx="19" cy="19" r="9" fill="#19a8ec" /><circle cx="14" cy="14" r="12" fill="#19a8ec" /><path d="M19 9c-2-4-10-3-10 1 0 5 10 2 10 7 0 5-9 5-11 1" fill="none" stroke="#fff" strokeWidth="3.600" /></>],
  ['Quill', <><path d="M1 25C3 12 8 2 16 0c1 6-3 14-10 18z" fill="#fff" stroke="#222" /><path d="M2 26C8 14 10 8 15 1M4 25l8-3 0-6 2 8 4-7v8l4-9 0 8 6-10" fill="none" stroke="#111" strokeWidth="1.400" /></>],
  ['Clock', <><circle cx="13" cy="13" r="12" fill="#f9b511" /><rect x="-1" y="16" width="30" height="11" fill="#200b0b" /><path d="M6 18v6M11 18h3v3h-3v3h3M19 18h3v6h-3M19 21h3" fill="none" stroke="#8e1c1c" strokeWidth="1.300" /></>],
  ['Galleon', <><circle cx="14" cy="14" r="13" fill="#1b2aa0" stroke="#6a86c8" strokeWidth="1.500" /><path d="M4 17l20 1-4 6H8z" fill="#5a3a20" /><path d="M7 16l1-7 4-1v8zM13 15l0-12 5 2 1 10zM20 16l-1-8 4 2 0 6z" fill="#dcdce2" stroke="#556" /><path d="M3 22q11 5 22 0" fill="none" stroke="#cfe" strokeWidth="1.500" /></>],
  ['Calculator', <><rect x="5" y="0" width="19" height="28" fill="#c8ccb6" stroke="#8c917c" /><rect x="7" y="2" width="15" height="4" fill="#e9f0d0" /><path d="M8 10h14M8 14h14M8 18h14M8 22h14M8 26h9" stroke="#f4f4ec" strokeWidth="2.500" strokeDasharray="3 1.300" /></>],
  ['Coconut', <><path d="M1 7c0 13 5 19 13 19s13-6 13-19z" fill="#7d4623" stroke="#4a2810" /><ellipse cx="14" cy="7" rx="13" ry="4" fill="#e9e2d2" stroke="#4a2810" /><ellipse cx="14" cy="7" rx="9" ry="2.500" fill="#57381f" /><path d="M15 12l-2 5h3l-2 5" fill="none" stroke="#fff" strokeWidth="1.300" /></>],
  ['Photo Booth', <><path d="M1 0h22v24H1z" fill="#b9b9b9" /><path d="M3 3h18v19H3z" fill="#c01818" /><path d="M6 3v19M10 3v19M14 3v19M18 3v19" stroke="#7c0a0a" strokeWidth="1.300" /><path d="M3 22l3-4 3 4 3-4 3 5-3 3H3z" fill="#222" /><path d="M20 8l8 3-6 17-8-3z" fill="#181818" /><path d="M20 12l4 1.500M18.500 17l4 1.500M17 22l4 1.500" stroke="#f2c9a5" strokeWidth="3.300" /></>],
  ['Hand', <><path d="M6 26c-1-6-7-10-4-12l4 2L5 4c2-2 3 0 4 8L10 1c2-2 4-1 3 11l3-10c3-1 3 1 1 11l4-7c3 0 2 2-1 12 0 5-2 7-4 9z" fill="#9fe0c4" stroke="#4c9478" /><ellipse cx="12" cy="18" rx="5" ry="3" fill="#fff" stroke="#38765c" /><circle cx="12" cy="18" r="1.700" fill="#265" /></>],
  ['Reader', <><rect x="0" y="0" width="28" height="28" fill="#c30b0f" stroke="#770306" /><path d="M6 22c5-3 9-11 8-16-1-3-3 0 0 6s6 7 9 6c2-1-2-3-8-1s-11 6-9 5z" fill="none" stroke="#fff" strokeWidth="1.500" /></>],
  ['GIMP', <><path d="M1 12l6 3c3-4 10-5 13-3l7-11c2 10 0 19-7 23-8 3-17-2-19-12z" fill="#857461" stroke="#3d342a" /><circle cx="11" cy="13" r="3.500" fill="#fff" stroke="#222" /><circle cx="17" cy="14" r="3" fill="#fff" stroke="#222" /><circle cx="12" cy="14" r="1.300" /><circle cx="17" cy="15" r="1.200" /><path d="M5 20l10 3" stroke="#e8c9a0" strokeWidth="2" /></>],
  ['Parallels VM', <><rect x="-2" y="4" width="31" height="20" fill="#f7f7f7" stroke="#9ab" /><path d="M-2 4h31v4H-2z" fill="#bcd2f0" /><circle cx="11" cy="15" r="4.500" fill="#666" /><circle cx="11" cy="15" r="2" fill="#bbb" /><path d="M20 12h7M20 15h7" stroke="#889" /><circle cx="22" cy="24" r="3.500" fill="#f0b53a" stroke="#b8801c" /><circle cx="27" cy="24" r="3.500" fill="#f0b53a" stroke="#b8801c" /></>, true],
  ['Transfer', <><path d="M14 8L2 27M14 8l13 18" stroke="#332a2a" strokeWidth="3.500" /><path d="M-1 18h30v3H-1z" fill="#c9ccd4" /><path d="M14-1l9 10h-5v12h-8V9H5z" fill="#32d63a" stroke="#1d8c22" /></>],
  ['BitTorrent', <><rect x="0" y="0" width="29" height="28" rx="7" fill="#2fa94a" stroke="#1b7830" /><path d="M25 10C17 3 5 8 8 17s14 9 16 2M23 13c-5-3-11 0-10 5s8 5 10 1M2 12c0 8 4 13 10 14" fill="none" stroke="#fff" strokeWidth="2.200" /></>],
  ['TextEdit', <><path d="M1 3l20-3 5 23-19 4z" fill="#fbfbfb" stroke="#aaa" /><path d="M5 7l14-2M6 11l14-2M7 15l13-2M8 19l12-2" stroke="#999" /><path d="M26 8L13 26" stroke="#445" strokeWidth="2.500" /></>],
  ['VLC', <><path d="M0 23l4-3h20l4 3v4H0z" fill="#f08012" stroke="#b85a04" /><path d="M12 0h4l6 21q-8 4-16 0z" fill="#f08012" /><path d="M10.500 6h7l1.300 5H9zM7.600 16h12.800l1 3.500q-7.500 3-15 0z" fill="#f6f2ec" /></>],
  ['MenuMeters', <><path d="M4 9l17-1 3 12H2z" fill="#777" stroke="#333" /><path d="M6 11l13-1 2 8H5z" fill="#ddd" /><path d="M13 4v11l5 4" fill="none" stroke="#444" strokeWidth="3" /><path d="M13 6v9" stroke="#eee" strokeWidth="1.500" /><path d="M4 4L20 1" stroke="#c21a1a" strokeWidth="5" strokeLinecap="round" /><rect x="-1" y="20" width="30" height="8" rx="3" fill="#0b1020" /><text x="14" y="27" textAnchor="middle" fontSize="7" fontWeight="700" fill="#fff" fontFamily={CAD}>2.9 K</text></>, true],
  ['Skull', <><path d="M-1 19l8-6 12 2 10 4-4 4-16 2z" fill="#dfe3ec" stroke="#8c94a6" /><circle cx="17" cy="11" r="7" fill="#a98f68" stroke="#5b4427" /><path d="M12 15h9v5h-9z" fill="#8b6f48" /><circle cx="14" cy="12" r="1.700" fill="#221408" /><circle cx="20" cy="12" r="1.700" fill="#221408" /></>],
  ['Hands', <><path d="M-4 3h14l5-3h13v8H15l-5-2H-4z" fill="#e5b08d" stroke="#7c4b31" strokeWidth=".7" /><path d="M9 8c3-1 5 0 5 4l4 7-2 9h-6l-2-9 2-3z" fill="#dca27e" stroke="#7c4b31" strokeWidth=".7" /></>, true],
  ['iPhoto', <><path d="M-1 6L18-1l6 20-18 8z" fill="#f8f8f6" stroke="#aaa" /><path d="M2 7l14-5 4 14L7 21z" fill="#3e8fd6" /><path d="M5 17l4-6 4 4 4-7 3 8-13 5z" fill="#7a5b3c" /><circle cx="10" cy="9" r="2.600" fill="#e2b48f" /><circle cx="22" cy="19" r="6" fill="#444" stroke="#111" /><circle cx="22" cy="17" r="3.500" fill="#c8d2dc" /></>, true],
];

const dockEnd: [string, Art][] = [
  ['Web', <><path d="M9 21h10M8 24h12M6 27h16" stroke="#aeb2bb" strokeWidth="2" /><circle cx="14" cy="10" r="10.500" fill="#c4c7ce" stroke="#888d98" /><circle cx="14" cy="10" r="2.500" fill="none" stroke="#fff" strokeWidth="1.700" /><path d="M17 7v5c0 3 4 2 4-2 0-9-14-9-14 0 0 7 7 8 11 6" fill="none" stroke="#fff" strokeWidth="1.700" /></>],
  ['Trash', <><path d="M2 5h24l-4 23H6z" fill="#75777c" opacity=".85" /><path d="M4 8l3 19M10 8l1 20M18 8l-1 20M24 8l-3 19M4 14h20M5 20h18" stroke="#4c4e53" /><ellipse cx="14" cy="6" rx="12" ry="4" fill="#dedede" stroke="#999" /><path d="M5 5l6-4 4 3 5-3 4 4-5 3-7-1z" fill="#fff" stroke="#bbb" /></>],
];

/* ---------- cable drawing ---------- */

const CX = 335.5;
const CY = 162;
const polar = (deg: number, r: number) => {
  const a = (deg * Math.PI) / 180;
  return [CX + Math.sin(a) * r, CY - Math.cos(a) * r] as const;
};
const steps = Array.from({ length: 10 }, (_, i) => i * 36);

const callouts: [string, number, number, string][] = [
  ['4', 258, 64, 'M258 66h10L295 106'],
  ['5', 247, 75, 'M247 76h11L288 100'],
  ['6', 234, 82, 'M233 84h11L287 105'],
  ['7', 229, 98, 'M228 99h15L278 106'],
  ['1', 391, 62, 'M402 64h-10L349 133'],
  ['2', 405, 70, 'M415 72h-12L355 133'],
  ['3', 421, 86, 'M432 89h-10L371 141'],
  ['8', 227, 244, 'M227 247h11L269 212'],
  ['9', 227, 268, 'M227 271h15L267 237'],
  ['10', 395, 258, 'M405 261h-8L382 242'],
  ['11', 395, 273, 'M403 275h-8L377 248'],
  ['12', 395, 288, 'M407 290h-13L370 252'],
];

const Drawing = () => (
  <svg width="756" height="342" viewBox="0 -2 756 342" role="img" aria-label="Kabeļa rasējums">
    <g stroke="#000" fill="none">
      <path d="M190.500 -2V342M215.500 -2V342M455.500 -2V342M472.500 -2V342" strokeWidth="2.300" />
      <path d="M197.500 -2V342M211.500 -2V342M460.500 -2V342M464.500 -2V342" stroke="#555" />
      <path d="M420.500 -2V6.500H455" stroke="#333" />
      <path d="M473 54.500H692V342" strokeWidth="2.200" />
      <path d="M480.500 342V62.500H685.500V342M484.500 342V66.500H681.500V342" stroke="#444" />
      <path d="M488.500 342V70.500H677.500V342" strokeWidth="2.500" />
    </g>
    <text x="425" y="3" fontSize="5" fill="#666" fontFamily={XP}>Mērogs 4:1</text>
    <g textAnchor="middle" textDecoration="underline">
      <text x="328" y="17" fontSize="7" fill="#222" fontFamily={CAD}>Kombinētā kabeļa rasējums</text>
      <text x="585" y="81" fontSize="6" fill="#333" fontFamily={MAC}>Kombinētā kabeļa specifikācija</text>
    </g>
    <circle cx={CX} cy={CY} r="105" fill="#8a8a8a" stroke="#222" />
    <circle cx={CX} cy={CY} r="96" fill="#8a8a8a" stroke="#666" strokeWidth="3" />
    <circle cx={CX} cy={CY} r="90" fill="#fff" stroke="#000" strokeWidth="3.500" />
    {steps.map(a => {
      const [x, y] = polar(a + 18, 82);
      return <circle key={a} cx={x} cy={y} r="6.200" fill="#8a8a8a" stroke="#333" />;
    })}
    {steps.map(a => {
      const [x, y] = polar(a, 68);
      return (
        <g key={a}>
          <circle cx={x} cy={y} r="19.800" fill="#666" stroke="#444" strokeWidth=".8" />
          <circle cx={x} cy={y} r="17.600" fill="#b6b6b6" stroke="#000" strokeWidth="1.600" />
          <circle cx={x} cy={y} r="5" />
        </g>
      );
    })}
    {[-19, 19].map(dx => [-19, 19].map(dy => (
      <g key={`${dx}${dy}`}>
        <circle cx={CX + dx} cy={CY + dy} r="19" fill="#b4b4b4" stroke="#444" strokeWidth=".8" />
        {[-8, 8].map(ex => [-8, 8].map(ey => (
          <g key={`${ex}${ey}`}>
            <circle cx={CX + dx + ex} cy={CY + dy + ey} r="8.200" fill="#5e5e5e" />
            <circle cx={CX + dx + ex} cy={CY + dy + ey} r="4.300" />
          </g>
        )))}
      </g>
    )))}
    <g fill="#8a8a8a" stroke="#333" strokeWidth=".9">
      <circle cx={CX} cy={CY} r="7" />
      <circle cx={CX} cy={CY - 39} r="8" />
      <circle cx={CX} cy={CY + 39} r="8" />
      <circle cx={CX - 41} cy={CY} r="9.500" />
      <circle cx={CX + 41} cy={CY} r="9.500" />
    </g>
    {callouts.map(([n, x, y, d]) => (
      <g key={n}>
        <path d={d} fill="none" stroke="#222" strokeWidth=".9" />
        <text x={x} y={y} fontSize="15" fontFamily={CAD}>{n}</text>
      </g>
    ))}
    <g stroke="#222" fill="none">
      <path d="M10.500 342V314M10.500 314l-3 7h7z" />
      <path d="M6 298l4.500 5L15 298M10.500 303v5" strokeWidth="1.300" />
    </g>
  </svg>
);

const rows: string[][] = [
  ['Simetriskā kabeļa vadītājs', 'Varš', '16', '1.4', '-'],
  ['Simetriskā vadītāja izolācija', 'Polietilēns', '16', '3.0', '0.8'],
  ['Simetriskā četrinieka apvalks', 'Polietilēns', '4', '7.24', '0.05'],
  ['Koaksiālā kabeļa iekšējais\nvadītājs', 'Varš', '10', '1.8', '-'],
  ['Koaksiālā kabeļa iekšējā\nizolācija', 'Polietilēna ripa', '10', '6.51', '2.356'],
  ['Koaksiālā kabeļa ārējais\nvadītājs', 'Varš', '10', '7.01', '0.25'],
  ['Koaksiālā kabeļa ārējā izolācija', 'Polietilēna lenta', '10', '7.81', '0.40'],
  ['Kordelis', 'Stirofleks', '15', '3.68', '-'],
  ['Apvalks', 'Polietilēns', '1', '39.44', '1.5'],
  ['Jostas izolācija', 'Papīrs', '1', '34.44', '0.6'],
  ['Mitrumaizsardzības apvalks', 'Polietilēns', '1', '35.24', '0.4'],
  ['Bruņu lentas', 'Tērauds', '1', '36.44', '0.6'],
];

const Spec = () => (
  <SpecTable aria-label="Kombinētā kabeļa specifikācija">
    <colgroup>
      <col width="14" /><col width="53" /><col width="43" /><col width="20" /><col width="25" /><col width="25" />
    </colgroup>
    <thead>
      <tr><th>Nr.</th><th>Nosaukums</th><th>Materiāls</th><th>Skaits</th><th>Izmērs,<br />[mm]</th><th>Biezums,<br />[mm]</th></tr>
    </thead>
    <tbody>
      {rows.map(([name, ...rest], i) => (
        <tr key={name}>
          <td>{i + 1}.</td>
          <Tiny $long={name.length > 31 && !name.includes('\n')}>{name}</Tiny>
          {rest.map((c, j) => <td key={j}>{c}</td>)}
        </tr>
      ))}
    </tbody>
  </SpecTable>
);

type SelProps = { label: string; value: string; w: number; off?: boolean; inset?: number; lead?: Art };
const Sel = ({ label, value, w, off, inset, lead }: SelProps) => (
  <Combo $w={w} $off={off}>
    {lead}
    <Picker aria-label={label} disabled={off} $in={inset}><option>{value}</option></Picker>
    <Drop $off={off}><Chevron c={off ? '#c0bdac' : undefined} /></Drop>
  </Combo>
);

const layerLead = (
  <>
    <Pic s={11}><path d="M5 11c0-2-2-3-2-5 0-6 10-6 10 0 0 2-2 3-2 5v3H5z" fill="#fffbd0" stroke="#776" /></Pic>
    <Pic s={11}><circle cx="8" cy="8" r="6.500" fill="#f5e03a" stroke="#a58a10" /></Pic>
    <Pic s={11}><circle cx="6" cy="6" r="5" fill="#a9c1d2" stroke="#678" /><path d="M8 8h7v7H8z" fill="#dde6ee" stroke="#678" /></Pic>
    <Pic s={11}><path d="M1 9V5c0-4 6-4 6 0v3M8 8V5c0-4 6-4 6 0v2" fill="none" stroke="#a59a1e" strokeWidth="2" /><path d="M6 8h9v6H6z" fill="#efe05a" stroke="#8a7f14" /></Pic>
    <Swatch />
  </>
);

const menu = ['File', 'Edit', 'View', 'Actions', 'Devices', 'Help'];
const cadMenu = ['File', 'Edit', 'View', 'Insert', 'Format', 'Tools', 'Draw', 'Dimension', 'Modify', 'Window', 'Help'];

export default function App() {
  return (
    <>
      <Global />
      <Desktop>
        <MenuBar>
          <Apple c="#2d79e6" s={13} />
          <MenuButton $bold>Parallels Desktop</MenuButton>
          {menu.map(m => <MenuButton key={m}>{m}</MenuButton>)}
          <MenuExtras>
            <Pic s={14}><circle cx="8" cy="7" r="6" fill="#c8a36b" /><path d="M1 8h15v6H1z" fill="#3a1513" /></Pic>
            <span>8:00</span>
            <Pic s={12}><circle cx="8" cy="8" r="6.800" fill="none" stroke="#222" strokeWidth="2" /><circle cx="8" cy="8" r="3" fill="none" stroke="#222" strokeWidth="1.800" /></Pic>
            <Apple c="#1f9b2c" s={12} />
            <Pic s={16}><path d="M1 6c4-4 10-4 14 0M3.500 9c3-3 6-3 9 0M6 11.500c1.500-1.500 2.500-1.500 4 0" fill="none" stroke="#222" strokeWidth="1.600" /><circle cx="8" cy="13.500" r="1.200" /></Pic>
            <Pic s={13}><path d="M1 6h3l4-4v12l-4-4H1z" fill="#222" /><path d="M10 5c2 2 2 4 0 6" fill="none" stroke="#222" strokeWidth="1.300" /></Pic>
            <Pic s={15}><rect x="1" y="4" width="12" height="8" fill="#fff" stroke="#888" /><path d="M14 6h1v4h-1zM4 8h3M7 6h2v4H7zM9 7h2M9 9h2" fill="#222" stroke="#222" strokeWidth=".9" /></Pic>
            <span>(Заряжен)</span>
            <Pic s={14}><path d="M1 2h14v4H1z" fill="#eee" stroke="#ccc" /><path d="M1 6h14v4H1z" fill="#b34a78" /><path d="M1 10h14v4H1z" fill="#7a2040" /><path d="M5 7l6-5 1 3-3 2 3 4H6z" fill="#111" /></Pic>
            <Clock>Пн 22 35</Clock>
            <Pic s={13}><path d="M4 5l8 6-4 4V1l4 4-8 6" fill="none" stroke="#222" strokeWidth="1.400" /></Pic>
            <Pic s={15}><circle cx="8" cy="8" r="7.500" fill="#2f79ea" /><circle cx="7" cy="7" r="3" fill="none" stroke="#fff" strokeWidth="1.600" /><path d="M9 9l4 4" stroke="#fff" strokeWidth="2" /></Pic>
          </MenuExtras>
        </MenuBar>

        <Browser>
          <BrowserTitle>
            <GreyDot aria-label="Close" /><GreyDot aria-label="Minimise" /><GreyDot aria-label="Zoom" />
            <BrowserCaption>Онлайн-игра GenieWar. Все Боги: Рейтинг игроков</BrowserCaption>
          </BrowserTitle>
          <BrowserBody>
            <SidePanel>
              <NewTab>
                <Pic s={15}><rect width="16" height="16" rx="2" fill="#fff" /><circle cx="8" cy="8" r="4.500" fill="none" stroke="#1f8a4c" strokeWidth="2" /><circle cx="8" cy="8" r="1.500" fill="#1f8a4c" /></Pic>
                New tab
              </NewTab>
              {panel.map(([n, art]) => (
                <PanelItem key={n} $active={n === 'Mail'}><Pic s={16}>{art}</Pic>{n}</PanelItem>
              ))}
            </SidePanel>
            <PageStrip>
              M
              <StripButton /><StripButton /><StripButton />
              <StripPage />
              <StripLabel>Re</StripLabel>
            </PageStrip>
            <BrowserRight>
              <TabRow>
                <TabEnd>v...<Pic s={11}><circle cx="8" cy="8" r="7.500" fill="#ddd" /><path d="M5 5l6 6M11 5l-6 6" stroke="#333" strokeWidth="2" /></Pic></TabEnd>
                <Pic s={10}><circle cx="8" cy="8" r="5" fill="none" stroke="#1c6c3e" strokeWidth="4" strokeDasharray="3 1" /></Pic>
                <Chevron c="#ddd" />
              </TabRow>
              <AddressRow>
                <AddressDrop aria-label="Addresses"><DropBox><Arrow d={DOWN} /></DropBox></AddressDrop>
                <ViewButton>
                  <Pic s={15}><rect width="16" height="16" rx="1" fill="#eee" /><path d="M2 9c3-5 9-5 12 0" fill="none" stroke="#333" strokeWidth="1.300" /><circle cx="8" cy="9" r="3" fill="#456" /></Pic>
                  View
                </ViewButton>
              </AddressRow>
              <PageLink href="#">ков онлайн</PageLink>
              <PageBand />
              <PageBlank><Pic s={10}><path d="M2 15L15 2M7 15l8-8M12 15l3-3" stroke="#888" /></Pic></PageBlank>
            </BrowserRight>
          </BrowserBody>
        </Browser>

        <FileLabels><span>Nirvana ...nian.mp3</span><span>процессо... ra.ru.htm</span></FileLabels>

        <Dock>
          <DockApps>
            {dock.map(([n, art, run]) => (
              <DockItem key={n} aria-label={n}>
                <svg width="28" height="28" viewBox="0 0 28 28" overflow="visible" aria-hidden="true">{art}</svg>
                {run && <svg width="7" height="4" aria-hidden="true"><path d="M0 4l3.500-4L7 4z" /></svg>}
              </DockItem>
            ))}
          </DockApps>
          <DockEnd>
            {dockEnd.map(([n, art]) => (
              <DockItem key={n} aria-label={n}>
                <svg width="28" height="28" viewBox="0 0 28 28" overflow="visible" aria-hidden="true">{art}</svg>
              </DockItem>
            ))}
          </DockEnd>
        </Dock>

        <VmWindow>
          <VmTitle>
            <Lights>
              <Light $c="#d8332c" aria-label="Close" /><Light $c="#f29a20" aria-label="Minimise" /><Light $c="#4cab30" aria-label="Zoom" />
            </Lights>
            <VmCaption>
              <Pic s={11}><path d="M1 4l6-3v12l-6 1zM8 4l7-2v11l-7 1z" fill="#f0a52c" stroke="#c67b12" /><path d="M6 6h4v4H6z" fill="#fff3c8" /></Pic>
              Microsoft Windows XP – Parallels Desktop
            </VmCaption>
            <TitleEnd><Pill aria-label="Toolbar" /></TitleEnd>
          </VmTitle>

          <VmMiddle>
            <Guest>
              <TaskBar>
                <StartButton>
                  <Pic s={14}><path d="M1 3q3-2 6 0L6 8Q4 6 0 8z" fill="#ea5a2c" /><path d="M8 3q3 2 7 0l-1 5q-4 2-7 0z" fill="#7bc043" /><path d="M0 9q3-2 6 0l-1 5q-3-2-6 0z" fill="#4a8cf0" /><path d="M7 9q3 2 7 0l-1 5q-4 2-7 0z" fill="#f8cc3a" /></Pic>
                  start
                </StartButton>
                <QuickLaunch>
                  {quick.map(([n, art]) => <QuickButton key={n} aria-label={n}><Pic s={13}>{art}</Pic></QuickButton>)}
                </QuickLaunch>
                <TaskButton><AcadIcon />AutoCAD 2005 - UNR...</TaskButton>
              </TaskBar>
              <InfoBar>
                <InfoCell>Uptime: <Lcd>0:00:04:32</Lcd></InfoCell>
                <InfoCell>Battery: ??? % <Pic s={12}><path d="M1 3l3 6 5 3 6-2-2-3-5 1z" fill="#dde" stroke="#223" /><path d="M7 13h7" stroke="#ea5" strokeWidth="2" /></Pic></InfoCell>
                <InfoCell>CPU: <Lcd>30 %</Lcd>
                  <svg width="39" height="11" aria-hidden="true"><rect width="39" height="11" fill="#0f4bb4" stroke="#5ea2f4" /><path d="M1 3h37" stroke="#2fa4e8" /><path d="M1 8l4-1 3-2 4 3 5-1 5 1 4-2 5 2 3-1 4 0" fill="none" stroke="#7fe4fa" /></svg>
                </InfoCell>
                <InfoCell>RAM: <Lcd>193/ 228</Lcd></InfoCell>
                <InfoCell>WA2: ???:??
                  <PlayerButtons>
                    <PlayerButton>W</PlayerButton><PlayerButton>J</PlayerButton>
                    <PlayerButton $gap aria-label="Previous"><Arrow d="M1 1h1v6H1zM5 1v6L2 4zM8 1v6L5 4z" c="#fff" /></PlayerButton>
                    <PlayerButton aria-label="Play"><Arrow d={RIGHT} c="#fff" /></PlayerButton>
                    <PlayerButton aria-label="Pause"><Arrow d="M2 2h1v4H2zM5 2h1v4H5z" c="#fff" /></PlayerButton>
                    <PlayerButton aria-label="Stop"><Arrow d="M2 2h4v4H2z" c="#fff" /></PlayerButton>
                    <PlayerButton aria-label="Next"><Arrow d="M7 1h1v6H7zM1 1v6l3-3zM4 1v6l3-3z" c="#fff" /></PlayerButton>
                  </PlayerButtons>
                </InfoCell>
              </InfoBar>
              <CadTitle><AcadIcon s={11} />AutoCAD 2005 - UNREGISTERED VERSION - [C:\Documents and Settings\Dimka\My Documents\dzinka.dwg]</CadTitle>
              <CadMenu>
                <CadIcon><Pic s={11}><rect width="16" height="16" rx="3" fill="#1c4d7c" /><path d="M2 3h8l4 4v6H8L2 8z" fill="#3ba0c8" /><path d="M8 4v8M4 8h8" stroke="#fff" strokeWidth="1.500" /></Pic></CadIcon>
                {cadMenu.map(m => <CadMenuItem key={m}>{m}</CadMenuItem>)}
              </CadMenu>
              <Toolbar $tall>
                <Grip />
                {standard.map(([n, art, w], i) => n === '|' ? <Split key={i} /> : <Tool key={n} $w={w} aria-label={n}><Pic s={13}>{art}</Pic></Tool>)}
                <Grip />
                <Tool aria-label="Text style"><Pic s={13}><path d="M2 14L8 2l2 9M4 9h6" fill="none" stroke="#222" strokeWidth="2" /><path d="M8 14l6-8" stroke="#555" strokeWidth="2.500" /></Pic></Tool>
                <Sel label="Text style" value="Standard" w={74} />
                <Tool aria-label="Dimension style"><Pic s={13}><path d="M2 13h12M2 10v5M14 10v5" stroke="#222" strokeWidth="1.600" /><path d="M5 12l8-9 1 3-6 6z" fill="#333" /></Pic></Tool>
                <Sel label="Dimension style" value="ISO-25" w={73} />
                <Tool aria-label="Table style"><Pic s={13}><path d="M1 4h12v10H1zM1 7h12M1 10h12M5 4v10M9 4v10" fill="#e2ecf8" stroke={N} strokeWidth="1.300" /><path d="M6 10l8-8" stroke="#853" strokeWidth="2.500" /></Pic></Tool>
                <Sel label="Table style" value="Standard" w={73} />
              </Toolbar>
              <Toolbar>
                <Grip />
                <Tool aria-label="Layers"><Pic s={13}>{layersArt}</Pic></Tool>
                <Sel label="Layer" value="0" w={216} inset={2} lead={layerLead} />
                <Tool aria-label="Make current"><Pic s={13}>{layersArt}<path d="M9 2h5v5" fill="none" stroke="#b58a1c" strokeWidth="2" /></Pic></Tool>
                <Tool aria-label="Layer previous"><Pic s={13}>{layersArt}<path d="M13 12C14 4 9 3 5 6" fill="none" stroke={N} strokeWidth="2" /></Pic></Tool>
                <Grip />
                <Sel label="Colour" value="ByLayer" w={109} inset={2} lead={<Swatch />} />
                <Sel label="Line type" value="ByLayer" w={117} inset={2} lead={<Rule $w={43} />} />
                <Sel label="Line weight" value="ByLayer" w={91} inset={2} lead={<Rule $w={26} />} />
                <Sel label="Plot style" value="ByColor" w={88} off inset={3} />
              </Toolbar>
              <Toolbar>
                <Grip />
                <ModifyRow>
                  {modify.map(([n, art]) => <Tool key={n} aria-label={n}><Pic s={13}>{art}</Pic></Tool>)}
                </ModifyRow>
              </Toolbar>
              <Work>
                <DrawTools>
                  <DrawGrip />
                  {draw.map(([n, art]) => <DrawTool key={n} aria-label={n}><Pic s={12}>{art}</Pic></DrawTool>)}
                </DrawTools>
                <Sheet><Drawing /><Spec /></Sheet>
              </Work>
            </Guest>
            <VScroll>
              <ScrollArrow aria-label="Up"><Arrow d={UP} /></ScrollArrow>
              <VThumb /><VRest />
              <ScrollArrow aria-label="Down"><Arrow d={DOWN} /></ScrollArrow>
            </VScroll>
            <SideTools>
              {side.map(([n, art, on, gap]) => <SideButton key={n} aria-label={n} $on={on} $gap={gap}><Pic s={14}>{art}</Pic></SideButton>)}
            </SideTools>
          </VmMiddle>
          <HScroll>
            <ScrollArrow aria-label="Left"><Arrow d={LEFT} /></ScrollArrow>
            <HThumb />
            <ScrollArrow aria-label="Right"><Arrow d={RIGHT} /></ScrollArrow>
          </HScroll>
          <StatusBar>
            Click inside OS Window to capture mouse
            <StatusIcons>
              {status.map(([n, art]) => <Pic key={n} s={13}>{art}</Pic>)}
              <Pic s={12}><path d="M2 15L15 2M7 15l8-8M12 15l3-3" stroke="#888" /></Pic>
            </StatusIcons>
          </StatusBar>
        </VmWindow>
      </Desktop>
    </>
  );
}
